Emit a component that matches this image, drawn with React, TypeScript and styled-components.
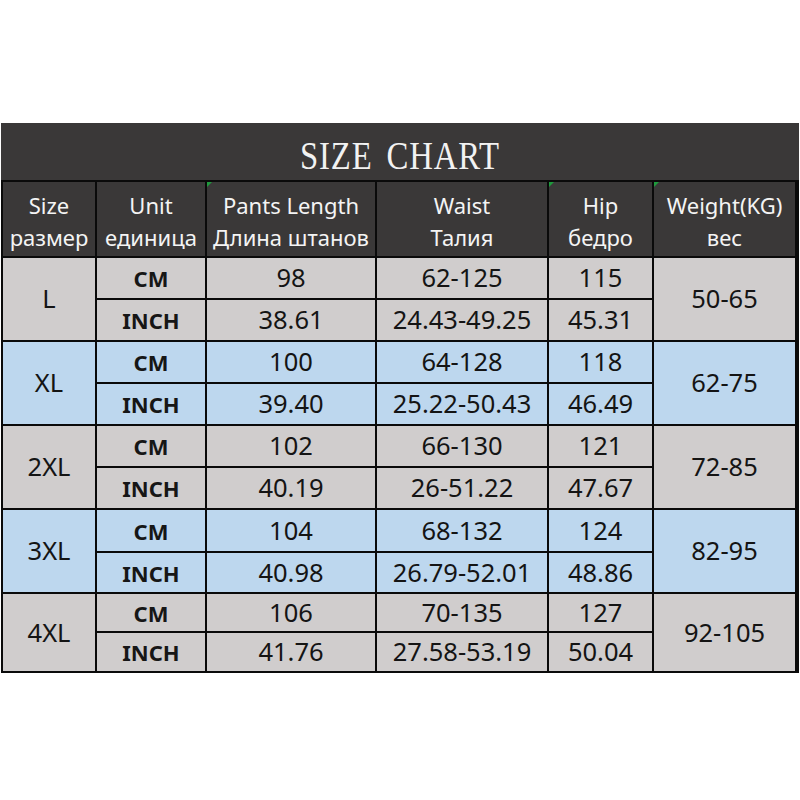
import React from "react";
import styled, { createGlobalStyle } from "styled-components";

const Global = createGlobalStyle`
  html, body { margin: 0; padding: 0; background: #ffffff; }
  body { font-family: "Noto Sans", "Open Sans", sans-serif; }
`;

const Page = styled.div`
  width: 800px;
  height: 800px;
  padding: 123px 0 0 1px;
  box-sizing: border-box;
  background: #ffffff;
`;

const Title = styled.div`
  width: 798px;
  height: 57px;
  background: #3a3838;
  display: flex;
  align-items: center;
  justify-content: center;
  padding-top: 8px;
  box-sizing: border-box;
`;

const TitleText = styled.span`
  display: inline-block;
  color: #f2f2f2;
  font-family: "Liberation Serif", "DejaVu Serif", serif;
  font-size: 39px;
  letter-spacing: 1px;
  word-spacing: 6px;
  transform: scaleX(0.84);
  line-height: 1;
`;

const Grid = styled.div`
  display: grid;
  width: 798px;
  box-sizing: border-box;
  background: #0a0a0a;
  padding: 2px;
  gap: 2px;
  grid-template-columns: 92px 108px 168px 170px 103px 141px;
  grid-template-rows: 74px 40px 40px 40px 40px 40px 40px 41px 39px 37px 38px;
`;

const Cell = styled.div<{ $tone: "head" | "grey" | "blue"; $span?: number }>`
  position: relative;
  display: flex;
  flex-direction: column;
  align-items: center;
  justify-content: center;
  box-sizing: border-box;
  padding-top: ${(p) => (p.$tone === "head" ? "3px" : "0")};
  background: ${(p) =>
    p.$tone === "head" ? "#3a3838" : p.$tone === "grey" ? "#d0cdcd" : "#bdd7ee"};
  color: ${(p) => (p.$tone === "head" ? "#f4f4f4" : "#141414")};
  grid-row: ${(p) => (p.$span ? `span ${p.$span}` : "auto")};
  font-size: 25px;
  line-height: 1;
  white-space: nowrap;
`;

const HeadLine = styled.span`
  font-size: 22px;
  line-height: 32px;
`;

const Unit = styled.span`
  font-weight: 700;
  font-size: 22px;
  color: #161616;
`;

const Value = styled.span`
  font-size: 25.5px;
`;

const Marker = styled.span`
  position: absolute;
  left: 0;
  top: 0;
  width: 0;
  height: 0;
  border-top: 5px solid #1e9a3c;
  border-right: 5px solid transparent;
`;

const headers: { en: string; ru: string; mark?: boolean }[] = [
  { en: "Size", ru: "размер" },
  { en: "Unit", ru: "единица" },
  { en: "Pants Length", ru: "Длина штанов", mark: true },
  { en: "Waist", ru: "Талия" },
  { en: "Hip", ru: "бедро", mark: true },
  { en: "Weight(KG)", ru: "вес", mark: true },
];

type Row = {
  size: string;
  cm: [string, string, string];
  inch: [string, string, string];
  weight: string;
};

const rows: Row[] = [
  { size: "L", cm: ["98", "62-125", "115"], inch: ["38.61", "24.43-49.25", "45.31"], weight: "50-65" },
  { size: "XL", cm: ["100", "64-128", "118"], inch: ["39.40", "25.22-50.43", "46.49"], weight: "62-75" },
  { size: "2XL", cm: ["102", "66-130", "121"], inch: ["40.19", "26-51.22", "47.67"], weight: "72-85" },
  { size: "3XL", cm: ["104", "68-132", "124"], inch: ["40.98", "26.79-52.01", "48.86"], weight: "82-95" },
  { size: "4XL", cm: ["106", "70-135", "127"], inch: ["41.76", "27.58-53.19", "50.04"], weight: "92-105" },
];

export default function App() {
  return (
    <>
      <Global />
      <Page>
        <Title>
          <TitleText>SIZE CHART</TitleText>
        </Title>
        <Grid>
          {headers.map((h) => (
            <Cell key={h.en} $tone="head">
              {h.mark && <Marker />}
              <HeadLine>{h.en}</HeadLine>
              <HeadLine>{h.ru}</HeadLine>
            </Cell>
          ))}
          {rows.map((r, i) => {
            const tone = i % 2 === 0 ? "grey" : "blue";
            return (
              <React.Fragment key={r.size}>
                <Cell $tone={tone} $span={2}>
                  <Value>{r.size}</Value>
                </Cell>
                <Cell $tone={tone}>
                  <Unit>CM</Unit>
                </Cell>
                {r.cm.map((v, j) => (
                  <Cell key={`c${j}`} $tone={tone}>
                    <Value>{v}</Value>
                  </Cell>
                ))}
                <Cell $tone={tone} $span={2}>
                  <Value>{r.weight}</Value>
                </Cell>
                <Cell $tone={tone}>
                  <Unit>INCH</Unit>
                </Cell>
                {r.inch.map((v, j) => (
                  <Cell key={`i${j}`} $tone={tone}>
                    <Value>{v}</Value>
                  </Cell>
                ))}
              </React.Fragment>
            );
          })}
        </Grid>
      </Page>
    </>
  );
}
